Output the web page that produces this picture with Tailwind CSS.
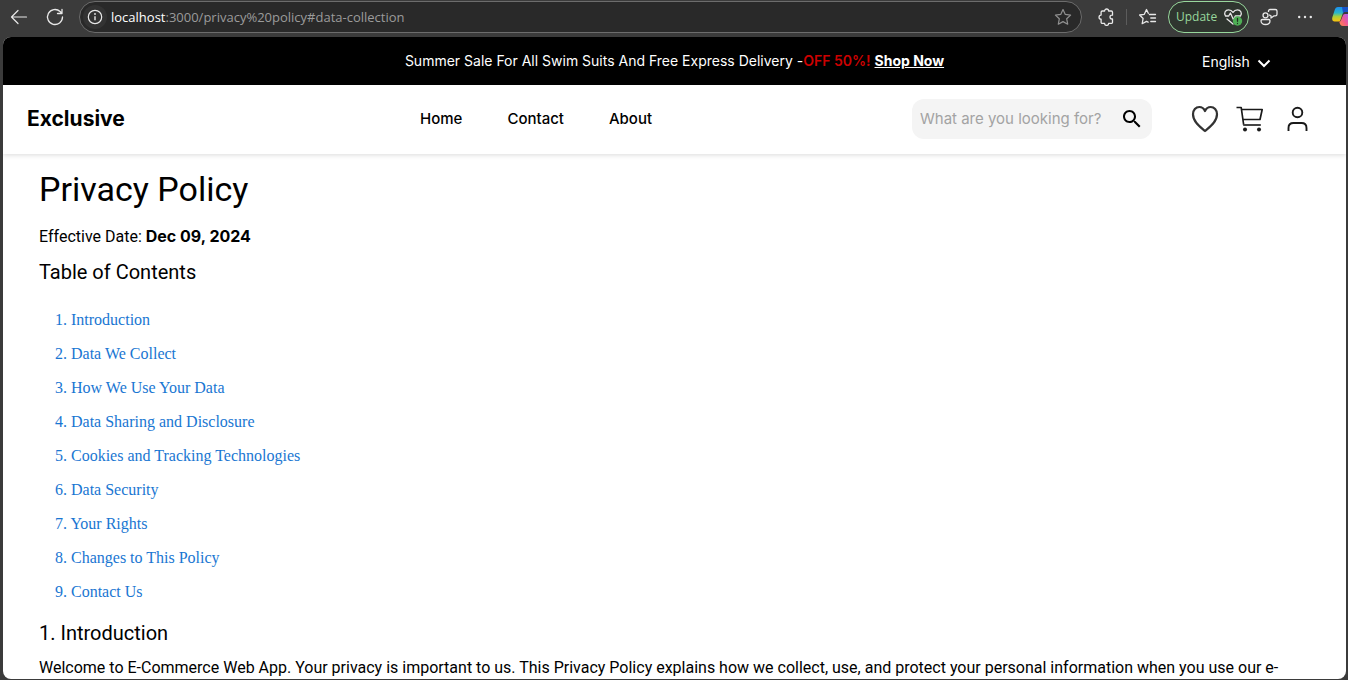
<!DOCTYPE html>
<html lang="en">
<head>
<meta charset="utf-8">
<meta name="viewport" content="width=device-width, initial-scale=1">
<title>Privacy Policy</title>
<script src="https://cdn.jsdelivr.net/npm/@tailwindcss/browser@4"></script>
</head>
<body class="h-screen overflow-hidden flex flex-col bg-[#3b3b3b] text-black font-['Roboto',sans-serif]">

<!-- Browser toolbar -->
<div class="h-[37px] shrink-0 flex items-center pb-1 pl-2 text-[#e8e8e8] font-['Open_Sans',sans-serif]">
  <button aria-label="Back" class="size-5 mr-4">
    <svg viewBox="0 0 20 20" class="size-5" fill="none" stroke="currentColor" stroke-width="1.2" stroke-linecap="round" stroke-linejoin="round"><path d="M18.500 10H3.500M10 3.500L3.500 10l6.500 6.500"/></svg>
  </button>
  <button aria-label="Refresh" class="size-5 mr-[15px]">
    <svg viewBox="0 0 20 20" class="size-5 mx-px" fill="none" stroke="currentColor" stroke-width="1.3" stroke-linecap="round" stroke-linejoin="round"><path d="M17.500 10a7.500 7.500 0 1 1-2.400-5.500L17 6.500M17 2.500v4h-4.500"/></svg>
  </button>
  <div class="flex-1 min-w-0 h-8 flex items-center rounded-full border border-[#6c6c6c] bg-[#292929] pl-[3px] pr-[9px]">
    <button aria-label="Site information" class="size-6 shrink-0 rounded-full bg-[#333333] grid place-items-center">
      <svg viewBox="0 0 16 16" class="size-4" fill="none" stroke="currentColor" stroke-width="1.200"><circle cx="8" cy="8" r="6.700"/><path d="M8 7.200v4" stroke-width="1.400"/><circle cx="8" cy="5" r=".9" fill="currentColor" stroke="none"/></svg>
    </button>
    <div class="flex-1 min-w-0 pl-1 text-[13px] leading-5 text-[#9b9b9b] whitespace-nowrap"><span class="text-white">localhost</span>:3000/privacy%20policy#data-collection</div>
    <button aria-label="Add to favorites" class="size-[18px] text-[#909090]">
      <svg viewBox="0 0 18 18" class="size-[18px]" fill="none" stroke="currentColor" stroke-width="1.200" stroke-linejoin="round"><path d="M9 1.500l2.300 4.900 5.300.7-3.900 3.700 1 5.400L9 13.600l-4.700 2.600 1-5.400L1.400 7.100l5.300-.7z"/></svg>
    </button>
  </div>
  <button aria-label="Extensions" class="size-[18px] ml-[15px]">
    <svg viewBox="0 0 18 18" class="size-[18px]" fill="none" stroke="currentColor" stroke-width="1.300" stroke-linejoin="round"><path d="M5.300 3h2.300a2 2 0 0 1 4 0h2.700a1.200 1.200 0 0 1 1.200 1.200v3h-.6a1.900 1.900 0 0 0 0 3.800h.6v3.200a1.200 1.200 0 0 1-1.200 1.200h-2.700a2 2 0 0 1-4 0H5.300a1.200 1.200 0 0 1-1.200-1.200V11.200a2.050 2.050 0 0 1 0-4.100V4.200a1.200 1.200 0 0 1 1.200-1.200z"/></svg>
  </button>
  <div class="w-px h-4 bg-[#5c5c5c] ml-[11px] mr-3"></div>
  <button aria-label="Favorites" class="size-[18px]">
    <svg viewBox="0 0 18 18" class="size-[18px]" fill="none" stroke="currentColor" stroke-width="1.300" stroke-linecap="round" stroke-linejoin="round"><path d="M10.400 6.500H16.500M11.800 10h4.700M11.800 13.500h4.700M9.300 5.300L7.500 1.500 5.300 6.300l-4.700.7 3.500 3.500-.9 5.200 4.300-2.300 1.600.8"/></svg>
  </button>
  <button class="h-8 w-[81px] ml-[11px] pl-[7px] pr-[5px] flex items-center justify-between rounded-full border border-[#98d79c] text-[#98d79c] text-[12px] bg-[#2f352f]">
    <span>Update</span>
    <svg viewBox="0 0 20 20" class="size-5" fill="none" stroke="#e8e8e8" stroke-width="1.300" stroke-linecap="round" stroke-linejoin="round"><path d="M2.500 9C.5 6 2.500 2.800 5.500 2.800c2 0 3.500 1 4.500 2.600 1-1.600 2.500-2.600 4.500-2.600 3 0 5 3.200 3 6.200M4 12l6 5M2.500 9h3.200l1.700-3 3 6.500L12.300 9h5.200"/><circle cx="14.500" cy="14" r="4.700" fill="#4eaf55" stroke="none"/><path d="M14.500 11.500v2.800M14.500 16.400v.1" stroke="#223022"/></svg>
  </button>
  <button aria-label="Feedback" class="size-[18px] ml-[11px]">
    <svg viewBox="0 0 18 18" class="size-[18px]" fill="none" stroke="currentColor" stroke-width="1.300" stroke-linejoin="round"><circle cx="5.500" cy="7.300" r="2.500"/><path d="M2.500 11.500h6.200c.8 0 1.300.5 1.300 1.200 0 2.300-1.800 3.800-4.500 3.800S1 15 1 12.700c0-.7.700-1.200 1.500-1.200zM10 1.500h5.300c1 0 1.700.7 1.700 1.600v3.200c0 1-.7 1.600-1.700 1.600h-1.500L11 10V7.900c-1-.1-1.500-.7-1.500-1.500"/><path d="M8.500 4V3c0-.9.700-1.500 1.500-1.500"/></svg>
  </button>
  <button aria-label="Settings and more" class="size-[18px] ml-[18px]">
    <svg viewBox="0 0 18 18" class="size-[18px]" fill="currentColor"><circle cx="3.200" cy="9" r="1.200"/><circle cx="9" cy="9" r="1.200"/><circle cx="14.800" cy="9" r="1.200"/></svg>
  </button>
  <button aria-label="Copilot" class="w-4 h-5 ml-[18px] overflow-hidden">
    <svg viewBox="0 0 16 20" class="w-4 h-5">
      <defs>
        <linearGradient id="cl" x1="0" y1="0" x2="0" y2="1"><stop offset="0" stop-color="#1c8ff0"/><stop offset=".4" stop-color="#28b6c9"/><stop offset=".65" stop-color="#a8cf3c"/><stop offset="1" stop-color="#ffc20a"/></linearGradient>
        <linearGradient id="cr" x1="1" y1="0" x2="0" y2="1"><stop offset="0" stop-color="#b25cf0"/><stop offset=".5" stop-color="#f25a8c"/><stop offset="1" stop-color="#ff8b45"/></linearGradient>
      </defs>
      <path d="M6 0h10v4h-3c-1 0-1.600.6-1.900 1.600L8.500 13c-.4 1-1.200 1.600-2.300 1.600H2.600C.7 14.600-.2 13 .3 10.600L2.700 3C3.300 1 4.300 0 6 0z" fill="url(#cl)"/>
      <path d="M10 0h6v5h-3c-1 0-1.600.6-1.900 1.600z" fill="#1753c8"/>
      <path d="M16 7v12H11c-2 0-3.200-1.200-3.800-4.400 1.100 0 1.500-.6 1.900-1.600l1.600-4c.4-1.300 1-2 2.300-2z" fill="url(#cr)"/>
    </svg>
  </button>
</div>

<!-- Page viewport -->
<div class="flex-1 min-h-0 ml-[3px] mr-[2px] mb-px rounded-lg overflow-hidden bg-white">

  <div class="h-12 bg-black text-white font-['Inter',sans-serif] text-[14px] leading-5 flex items-center">
    <div class="flex-1 pl-36 text-center whitespace-nowrap">Summer Sale For All Swim Suits And Free Express Delivery -<span class="text-[#cc0000] font-semibold">OFF 50%!</span> <a href="#shop" class="font-bold underline">Shop Now</a></div>
    <button class="flex items-center gap-[6px] mr-[74px] pt-[2px] w-[70px]">
      <span>English</span>
      <svg viewBox="0 0 16 16" class="size-4 shrink-0 mt-[2px]" fill="none" stroke="currentColor" stroke-width="2"><path d="M2.500 5.500L8 11l5.500-5.500"/></svg>
    </button>
  </div>

  <header class="relative h-[69px] bg-white shadow-[0_1px_5px_rgba(0,0,0,0.15)] flex items-center pl-6 pr-[38px] pb-px font-['Inter',sans-serif]">
    <a href="#home" class="w-[393px] text-[21px] leading-7 font-bold">Exclusive</a>
    <nav class="flex-1 flex gap-[45px] text-[15px] leading-6 font-medium">
      <a href="#home">Home</a>
      <a href="#contact">Contact</a>
      <a href="#about">About</a>
    </nav>
    <form class="w-60 h-10 flex items-center rounded-xl bg-[#f4f4f4] px-2">
      <input type="text" aria-label="Search products" placeholder="What are you looking for?" class="flex-1 min-w-0 bg-transparent text-[15px] leading-5 placeholder:text-[#a3a3a3] outline-none">
      <button type="button" aria-label="Search" class="size-6">
        <svg viewBox="0 0 24 24" class="size-6"><path d="M15.500 14h-.790l-.280-.270C15.410 12.590 16 11.110 16 9.500 16 5.910 13.090 3 9.500 3S3 5.910 3 9.500 5.910 16 9.500 16c1.610 0 3.090-.590 4.230-1.570l.270.280v.790l5 4.990L20.490 19l-4.990-5zm-6 0C7.010 14 5 11.990 5 9.500S7.010 5 9.500 5 14 7.010 14 9.500 11.990 14 9.500 14z"/></svg>
      </button>
    </form>
    <a href="#wishlist" aria-label="Wishlist" class="ml-[39px]">
      <svg viewBox="0 0 28 28" class="size-7" fill="none" stroke="#333" stroke-width="2.200" stroke-linejoin="round"><path d="M14 26C9.500 22.500 2 17 2 9.300 2 5 4.800 2 8.300 2 11 2 13 3.700 14 6c1-2.300 3-4 5.700-4C23.200 2 26 5 26 9.300 26 17 18.500 22.500 14 26z"/></svg>
    </a>
    <a href="#cart" aria-label="Cart" class="ml-[17px]">
      <svg viewBox="0 0 28 28" class="size-7" fill="none" stroke="#1a1a1a" stroke-width="1.700" stroke-linejoin="round"><path d="M.5 2.500h4.700l2.500 17.500M5.500 4.500h20.700L24 14.500H7"/><path d="M7.200 20h17.600" stroke="#444" stroke-width="2"/><circle cx="9" cy="24.500" r="2" fill="#1a1a1a" stroke="none"/><circle cx="23" cy="24.500" r="2" fill="#1a1a1a" stroke="none"/></svg>
    </a>
    <a href="#account" aria-label="Account" class="ml-[20px]">
      <svg viewBox="0 0 24 28" class="w-6 h-7" fill="none" stroke="#1a1a1a" stroke-width="1.900"><circle cx="13.500" cy="7.500" r="4.800"/><path d="M4.500 26v-3c0-3 2-5 5-5h8c3 0 5 2 5 5v3"/></svg>
    </a>
  </header>

  <main class="px-9 pt-[14px]">
    <h1 class="text-[34px] leading-[42px]">Privacy Policy</h1>
    <p class="mt-[14px] text-[16px] leading-6">Effective Date: <b class="font-bold font-['Inter',sans-serif]">Dec 09, 2024</b></p>
    <h2 class="mt-[7px] text-[20px] leading-8">Table of Contents</h2>
    <ol class="mt-[15px] pl-4 text-[16px] leading-[34px] text-[#1976d2] font-['Liberation_Serif',serif]">
      <li><a href="#introduction">1. Introduction</a></li>
      <li><a href="#data-collection">2. Data We Collect</a></li>
      <li><a href="#data-usage">3. How We Use Your Data</a></li>
      <li><a href="#data-sharing">4. Data Sharing and Disclosure</a></li>
      <li><a href="#cookies">5. Cookies and Tracking Technologies</a></li>
      <li><a href="#data-security">6. Data Security</a></li>
      <li><a href="#your-rights">7. Your Rights</a></li>
      <li><a href="#changes">8. Changes to This Policy</a></li>
      <li><a href="#contact">9. Contact Us</a></li>
    </ol>
    <h2 id="introduction" class="mt-2 text-[20px] leading-8">1. Introduction</h2>
    <p class="mt-[7px] text-[16px] leading-6 whitespace-nowrap">Welcome to E-Commerce Web App. Your privacy is important to us. This Privacy Policy explains how we collect, use, and protect your personal information when you use our e-</p>
  </main>
</div>
</body>
</html>
